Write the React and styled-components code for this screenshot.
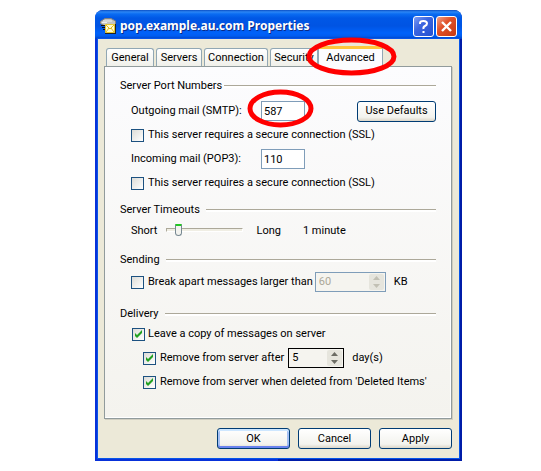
import React, { useState } from "react";
import styled, { createGlobalStyle, css } from "styled-components";

const GlobalStyle = createGlobalStyle`
    * {
        box-sizing: border-box;
    }
    body {
        margin: 0;
        background: #fff;
        color: #000;
        font: 11px/14px Roboto, "Liberation Sans", sans-serif;
    }
    button, input {
        margin: 0;
        font: inherit;
        color: inherit;
    }
`

const Page = styled.main`
    padding: 10px 79px 11px 95px;
`
const Window = styled.section`
    display: flex;
    flex-direction: column;
    border-radius: 8px 8px 0 0;
    background: linear-gradient(90deg, #0831d9 50%, #001ca8 50%);
    overflow: hidden;
`
const TitleBar = styled.header`
    display: flex;
    align-items: center;
    gap: 4px;
    height: 29px;
    padding: 3px 5px 0 5px;
    background: linear-gradient(#0a4fc4 0, #2b86f5 2px, #0a6cf2 4px, #0058e6 8px, #0054e3 16px, #0062fa 23px, #005cf0 26px, #0040c0 29px);
`
const Title = styled.h1`
    flex: 1;
    margin: 0;
    color: #fff;
    font: bold 12px/16px "Noto Sans", "Open Sans", sans-serif;
    text-shadow: 1px 1px #0a2a86;
    white-space: nowrap;
`
const CaptionButton = styled.button`
    display: flex;
    align-items: center;
    justify-content: center;
    width: 21px;
    height: 21px;
    margin-left: -2px;
    padding: 0;
    border: 1px solid #fff;
    border-radius: 3px;
    background: ${props => props.$close
        ? "linear-gradient(135deg, #f0a088, #e0512a 40%, #c83810)"
        : "linear-gradient(135deg, #7c9cf4, #3c66e0 40%, #2450d0)"};
`
const Body = styled.div`
    margin: 0 3px 3px;
    padding: 7px 7px 9px 6px;
    box-shadow: 0 0 0 1px #0855e8;
    background: #ece9d8;
`
const Tabs = styled.nav`
    display: flex;
    align-items: flex-end;
    gap: 2px;
    height: 20px;
    padding-left: 2px;
`
const Tab = styled.button`
    flex: none;
    width: ${props => props.$width}px;
    height: 18px;
    padding: 0;
    border: 1px solid #91a7b4;
    border-bottom: 0;
    border-radius: 3px 3px 0 0;
    background: linear-gradient(#fff, #f0f0ea);
    white-space: nowrap;

    ${props => props.$active && css`
        position: relative;
        height: 21px;
        margin: 0 0 -1px -2px;
        border-top: 3px solid #ffc73c;
        background: #fcfcfe;
    `}
`
const Panel = styled.form`
    padding: 10px 15px 25px;
    border: 1px solid #919b9c;
    box-shadow: 1px 1px #d0cec0, inset -1px -1px #fff;
    background: linear-gradient(#fcfcfe, #f4f3ee);
`
const Group = styled.fieldset`
    min-width: 0;
    margin: 0 0 ${props => props.$after}px;
    padding: 0;
    border: 0;
`
const Legend = styled.legend`
    display: flex;
    align-items: center;
    gap: ${props => props.$gap}px;
    width: 100%;
    height: 18px;
    margin-bottom: ${props => props.$after || 0}px;
    padding: 0;

    &::after {
        content: "";
        flex: 1;
        height: 2px;
        border-top: 1px solid #aca899;
        background: #fff;
    }
`
const Row = styled.div`
    display: flex;
    align-items: center;
    height: ${props => props.$height || 24}px;
    padding-left: ${props => props.$indent || 11}px;
    white-space: nowrap;
`
const PortLabel = styled.label`
    width: 130px;
`
const TextBox = styled.input`
    width: 44px;
    height: 20px;
    padding: 0 2px;
    border: 1px solid #7f9db9;
    border-radius: 0;
    background: #fff;
    outline: 0;
`
const Circled = styled.span`
    position: relative;
    display: flex;
`
const RingSvg = styled.svg`
    position: absolute;
    z-index: 1;
    left: ${props => props.$left}px;
    top: ${props => props.$top}px;
    pointer-events: none;
`
const CheckLabel = styled.label`
    display: flex;
    align-items: center;
    gap: ${props => props.$gap || 4}px;
`
const CheckBox = styled.input`
    appearance: none;
    width: 13px;
    height: 13px;
    border: 1px solid #1c5180;
    background: linear-gradient(135deg, #dcdcd7, #fff);

    &:checked {
        background: url("data:image/svg+xml,%3Csvg xmlns='http://www.w3.org/2000/svg' viewBox='0 0 11 11'%3E%3Cpath d='M2 4v3l2 2 5-5V1L4 6z' fill='%2321a121'/%3E%3C/svg%3E"), linear-gradient(135deg, #dcdcd7, #fff);
    }
`
const PushButton = styled.button`
    width: ${props => props.$width || 73}px;
    height: 21px;
    padding: 0;
    border: 1px solid #003c74;
    border-radius: 3px;
    background: linear-gradient(#fff, #f3f3ee 80%, #dcd6c8);
    white-space: nowrap;

    ${props => props.$primary && css`
        box-shadow: inset 0 2px #cee7ff, inset 0 -2px #6982ee, inset 2px 0 #a4c0f4, inset -2px 0 #a4c0f4;
    `}
`
const DefaultsButton = styled(PushButton)`
    margin-left: auto;
`
const Range = styled.input`
    appearance: none;
    width: 77px;
    height: 14px;
    margin: 0 13px 2px 9px;
    background: transparent;

    &::-webkit-slider-runnable-track {
        height: 4px;
        border: 1px solid #aca899;
        border-color: #aca899 #fff #fff #aca899;
        background: #f0eee4;
    }
    &::-webkit-slider-thumb {
        appearance: none;
        width: 7px;
        height: 12px;
        margin-top: -5px;
        border: 1px solid #778892;
        border-top: 2px solid #21c821;
        border-radius: 1px 1px 4px 4px;
        background: #f3f3ef;
    }
`
const Spacer = styled.span`
    width: ${props => props.$width}px;
`
const Spin = styled.span`
    display: flex;
    width: ${props => props.$width}px;
    height: 20px;
    padding: 1px;
    border: 1px solid ${props => props.$disabled ? "#7f9db9" : "#000"};
    color: ${props => props.$disabled ? "#aca899" : "#000"};
    background: #f5f4ef;
`
const SpinInput = styled.input`
    flex: 1;
    min-width: 0;
    padding: 0 2px;
    border: 0;
    background: transparent;
    outline: 0;
    appearance: textfield;

    &::-webkit-inner-spin-button {
        appearance: none;
    }
`
const SpinArrows = styled.span`
    display: flex;
    flex-direction: column;
    width: 15px;
    border-radius: 2px;
    background: #e6e5dd;
    color: ${props => props.$disabled ? "#c2c0b4" : "#6c6c64"};
`
const Arrow = styled.button`
    display: flex;
    flex: 1;
    align-items: center;
    justify-content: center;
    min-height: 0;
    padding: 0;
    border: 0;
    background: transparent;
`
const Footer = styled.footer`
    display: flex;
    justify-content: flex-end;
    gap: 8px;
    padding-top: 9px;
`

function Ring({ width, height, left, top }) {
    return (
        <RingSvg width={width} height={height} $left={left} $top={top} aria-hidden="true">
            <ellipse
                cx={width / 2}
                cy={height / 2}
                rx={width / 2 - 3}
                ry={height / 2 - 3}
                fill="none"
                stroke="#f00"
                strokeWidth="5"
            />
        </RingSvg>
    );
}

function MailIcon() {
    return (
        <svg width="16" height="16" viewBox="0 0 16 16" aria-hidden="true">
            <path d="M.5 3.500 5 .5h6l4.500 2.500v3l-4 2H5L.5 5.500z" fill="#c4c4c0" stroke="#808080" />
            <path d="M3 3h9M2 4.500h5" stroke="#eee" />
            <path d="M1 7.500h4M2 9.500h3M3 11.500h2" stroke="#111" />
            <path d="M5.500 6.500h9v8h-9z" fill="#fffbd0" stroke="#e8c830" />
            <path d="m6 7 4 4 4-4M6 14l3-4m5 4-3-4" fill="none" stroke="#e0b820" />
            <path d="M5 15.500h11M15.500 6v9" stroke="#222" />
        </svg>
    );
}

function Spinner({ id, width, disabled, value, onChange, label }) {
    return (
        <Spin $width={width} $disabled={disabled}>
            <SpinInput
                id={id}
                type="number"
                aria-label={label}
                value={value}
                disabled={disabled}
                onChange={e => onChange(Number(e.target.value))}
            />
            <SpinArrows $disabled={disabled}>
                <Arrow type="button" aria-label="Increase" disabled={disabled} onClick={() => onChange(value + 1)}>
                    <svg width="7" height="4"><path d="M0 4 3.500 0 7 4z" fill="currentColor" /></svg>
                </Arrow>
                <Arrow type="button" aria-label="Decrease" disabled={disabled} onClick={() => onChange(value - 1)}>
                    <svg width="7" height="4"><path d="M0 0h7L3.500 4z" fill="currentColor" /></svg>
                </Arrow>
            </SpinArrows>
        </Spin>
    );
}

function Check({ label, checked = false, gap }) {
    return (
        <CheckLabel $gap={gap}>
            <CheckBox type="checkbox" defaultChecked={checked} />
            {label}
        </CheckLabel>
    );
}

export default function App() {
    const [size, setSize] = useState(60);
    const [days, setDays] = useState(5);

    return (
        <Page>
            <GlobalStyle />
            <Window>
                <TitleBar>
                    <MailIcon />
                    <Title>pop.example.au.com Properties</Title>
                    <CaptionButton aria-label="Help">
                        <svg width="13" height="15" viewBox="0 0 13 15">
                            <path d="M3 5V4q0-2 3.500-2T10 4.500q0 1.500-2 2.500T6.500 10" fill="none" stroke="#fff" strokeWidth="2" />
                            <path d="M5.500 12h2v2h-2z" fill="#fff" />
                        </svg>
                    </CaptionButton>
                    <CaptionButton $close aria-label="Close">
                        <svg width="13" height="13" viewBox="0 0 13 13">
                            <path d="m2 2 9 9M11 2l-9 9" stroke="#fff" strokeWidth="2.400" />
                        </svg>
                    </CaptionButton>
                </TitleBar>
                <Body>
                    <Tabs>
                        <Tab $width={48}>General</Tab>
                        <Tab $width={46}>Servers</Tab>
                        <Tab $width={64}>Connection</Tab>
                        <Tab $width={48}>Security</Tab>
                        <Tab $width={65} $active>
                            Advanced
                            <Ring width={91} height={39} left={-13} top={-12} />
                        </Tab>
                    </Tabs>
                    <Panel>
                        <Group $after={6}>
                            <Legend $gap={2} $after={4}>Server Port Numbers</Legend>
                            <Row>
                                <PortLabel htmlFor="smtp">Outgoing mail (SMTP):</PortLabel>
                                <Circled>
                                    <TextBox id="smtp" defaultValue="587" />
                                    <Ring width={67} height={39} left={-14} top={-12} />
                                </Circled>
                                <DefaultsButton type="button" $width={79}>Use Defaults</DefaultsButton>
                            </Row>
                            <Row>
                                <Check label="This server requires a secure connection (SSL)" />
                            </Row>
                            <Row>
                                <PortLabel htmlFor="pop">Incoming mail (POP3):</PortLabel>
                                <TextBox id="pop" defaultValue="110" />
                            </Row>
                            <Row>
                                <Check label="This server requires a secure connection (SSL)" />
                            </Row>
                        </Group>
                        <Group $after={8}>
                            <Legend $gap={6}>Server Timeouts</Legend>
                            <Row>
                                <label htmlFor="timeout">Short</label>
                                <Range id="timeout" type="range" min="0" max="9" defaultValue="1" />
                                <span>Long</span>
                                <Spacer $width={22} />
                                <span>1 minute</span>
                            </Row>
                        </Group>
                        <Group $after={10}>
                            <Legend $gap={6}>Sending</Legend>
                            <Row $height={26}>
                                <Check label="Break apart messages larger than" />
                                <Spacer $width={2} />
                                <Spinner width={71} disabled value={size} onChange={setSize} label="Message size" />
                                <Spacer $width={8} />
                                <span>KB</span>
                            </Row>
                        </Group>
                        <Group $after={0}>
                            <Legend $gap={6}>Delivery</Legend>
                            <Row $height={22} $indent={12}>
                                <Check label="Leave a copy of messages on server" checked gap={3} />
                            </Row>
                            <Row $height={26} $indent={23}>
                                <Check label="Remove from server after" checked />
                                <Spacer $width={4} />
                                <Spinner width={56} value={days} onChange={setDays} label="Days" />
                                <Spacer $width={8} />
                                <span>day(s)</span>
                            </Row>
                            <Row $height={22} $indent={23}>
                                <Check label="Remove from server when deleted from 'Deleted Items'" checked />
                            </Row>
                        </Group>
                    </Panel>
                    <Footer>
                        <PushButton $primary>OK</PushButton>
                        <PushButton>Cancel</PushButton>
                        <PushButton>Apply</PushButton>
                    </Footer>
                </Body>
            </Window>
        </Page>
    );
}
